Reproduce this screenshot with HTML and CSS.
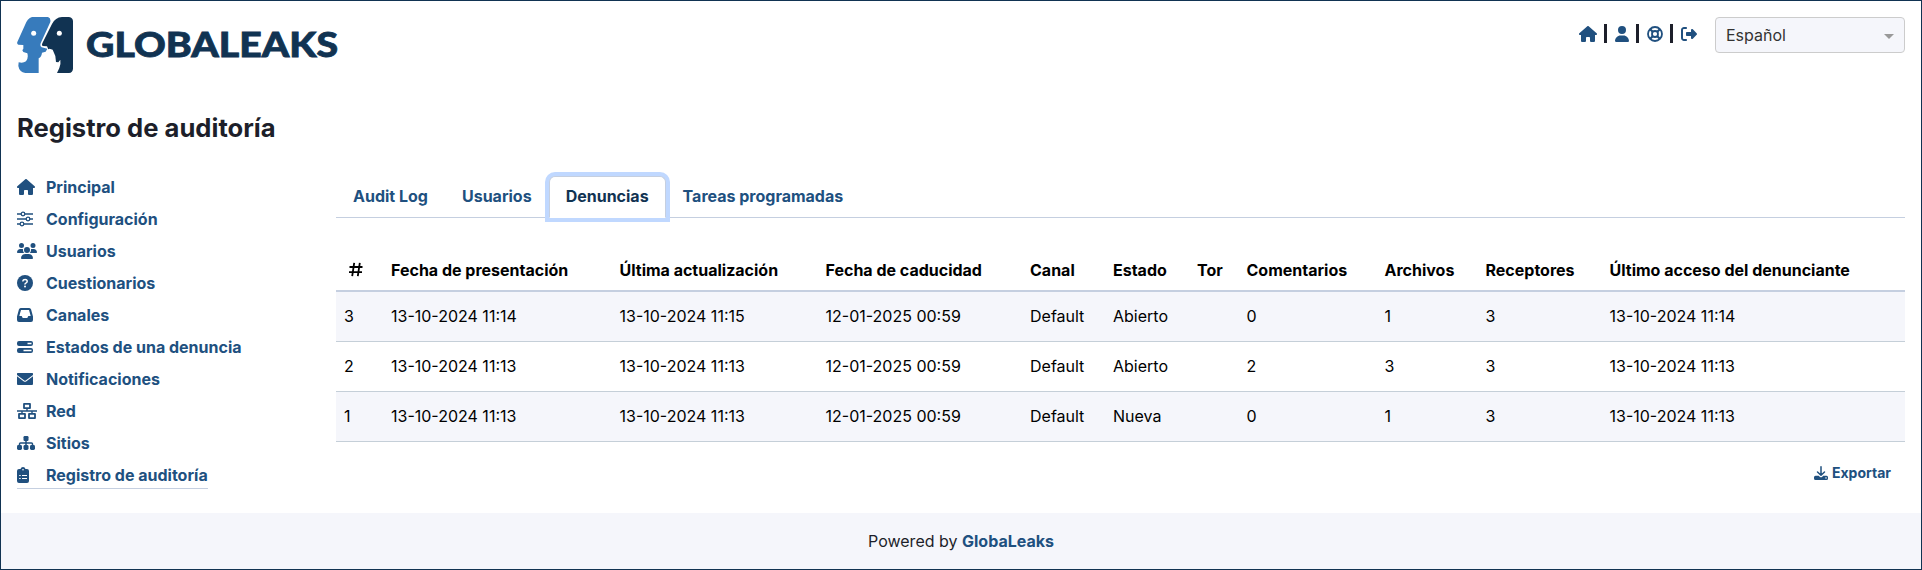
FILE: index.html
```html
<!DOCTYPE html>
<html lang="es">
<head>
<meta charset="utf-8">
<title>GlobaLeaks</title>
<link rel="stylesheet" href="styles.css">
</head>
<body>
<svg class="defs" width="0" height="0">
  <symbol id="home" viewBox="0 0 576 512"><path d="M575.8 255.5c0 18-15 32.1-32 32.1h-32l.7 160.2c0 2.7-.2 5.4-.5 8.1V472c0 22.1-17.9 40-40 40H392c-22.1 0-40-17.9-40-40V384c0-17.7-14.3-32-32-32H256c-17.7 0-32 14.3-32 32v88c0 22.1-17.9 40-40 40H104c-22.1 0-40-17.9-40-40V287.6H32c-18 0-32-14-32-32.1c0-9 3-17 10-24L266.4 8c7-7 15-8 22-8s15 2 21 7L564.8 231.5c8 7 12 15 11 24z"/></symbol>
</svg>
<div class="page">
  <header class="header">
    <div class="brand">
      <svg class="mark" viewBox="51 51 168 168">
        <path fill="#377bbc" d="M96 51H144Q153 53 151 66L122 130Q119 139 125 142L142 146L137 155L126 158Q125 170 116 175V219H76Q58 216 55 198L56 187Q69 191 78 184Q86 174 82 160L70 156L67 151L70 146V135L55 134Q50 131 52 126L74 77Q82 55 96 51Z"/>
        <path fill="#113352" d="M186 51H207Q219 53 219 64V206Q218 218 207 219H171L178 204Q183 191 181 179L175 187L168 186L166 168L158 149L149 146L145 148L141 139L128 138Q124 136 127 130L156 72Q166 52 186 51Z"/>
        <circle cx="101" cy="100" r="7.5" fill="#fff"/><circle cx="178" cy="100" r="7.5" fill="#fff"/>
      </svg>
      <svg class="wordmark" viewBox="0 0 256 40"><text x="0" y="33" textLength="252" lengthAdjust="spacingAndGlyphs">GLOBALEAKS</text></svg>
    </div>
    <div class="tools">
      <svg class="icon" width="18" height="16"><use href="#home"/></svg><i class="bar"></i>
      <svg class="icon" width="14" height="16" viewBox="0 0 448 512"><path d="M224 256A128 128 0 1 0 224 0a128 128 0 1 0 0 256zm-45.7 48C79.8 304 0 383.8 0 482.3C0 498.7 13.3 512 29.7 512H418.3c16.4 0 29.7-13.3 29.7-29.7C448 383.8 368.2 304 269.7 304H178.3z"/></svg><i class="bar"></i>
      <svg class="icon line" width="16" height="16" viewBox="0 0 16 16"><circle cx="8" cy="8" r="7" stroke-width="1.8"/><circle cx="8" cy="8" r="3" stroke-width="1.8"/><path stroke-width="2.2" d="M3.2 3.2l2.5 2.5M12.8 3.2l-2.5 2.5M3.2 12.8l2.5-2.5M12.8 12.8l-2.5-2.5"/></svg><i class="bar"></i>
      <svg class="icon" width="16" height="16" viewBox="0 0 512 512"><path d="M377.9 105.9L500.7 228.7c7.2 7.2 11.3 17.1 11.3 27.3s-4.1 20.1-11.3 27.3L377.9 406.1c-6.4 6.4-15 9.9-24 9.9c-18.7 0-33.9-15.2-33.9-33.9l0-62.1-128 0c-17.7 0-32-14.3-32-32l0-64c0-17.7 14.3-32 32-32l128 0 0-62.1c0-18.7 15.2-33.9 33.9-33.9c9 0 17.6 3.6 24 9.9zM160 96L96 96c-17.7 0-32 14.3-32 32l0 256c0 17.7 14.3 32 32 32l64 0c17.7 0 32 14.3 32 32s-14.3 32-32 32l-64 0c-53 0-96-43-96-96L0 128C0 75 43 32 96 32l64 0c17.7 0 32 14.3 32 32s-14.3 32-32 32z"/></svg>
      <div class="select"><span>Español</span><i class="caret"></i></div>
    </div>
  </header>
  <h1 class="title">Registro de auditoría</h1>
  <div class="main">
    <nav class="side">
      <a class="item"><span class="ico"><svg class="icon" width="18" height="16"><use href="#home"/></svg></span>Principal</a>
      <a class="item"><span class="ico"><svg class="icon line" width="16" height="16" viewBox="0 0 16 16"><path stroke-width="1.5" d="M0 3h4M8 3h8M0 8h9M13 8h3M0 13h3M7 13h9"/><g stroke-width="1.3"><circle cx="6" cy="3" r="1.8"/><circle cx="11" cy="8" r="1.8"/><circle cx="5" cy="13" r="1.8"/></g></svg></span>Configuración</a>
      <a class="item"><span class="ico"><svg class="icon" width="20" height="16" viewBox="0 0 640 512"><path d="M144 0a80 80 0 1 1 0 160A80 80 0 1 1 144 0zM512 0a80 80 0 1 1 0 160A80 80 0 1 1 512 0zM0 298.7C0 239.8 47.8 192 106.7 192h42.7c15.900 0 31 3.500 44.600 9.700c-1.300 7.200-1.900 14.700-1.900 22.300c0 38.200 16.800 72.500 43.300 96H21.300C9.600 320 0 310.400 0 298.700zM405.300 320h-.7c26.600-23.500 43.300-57.800 43.300-96c0-7.600-.7-15-1.900-22.300c13.600-6.300 28.700-9.700 44.600-9.700h42.700C592.200 192 640 239.800 640 298.700c0 11.800-9.600 21.300-21.300 21.300H405.300zM224 224a96 96 0 1 1 192 0 96 96 0 1 1-192 0zM128 485.300C128 411.700 187.700 352 261.300 352H378.700C452.300 352 512 411.700 512 485.300c0 14.700-11.900 26.700-26.700 26.700H154.700c-14.700 0-26.700-11.900-26.700-26.700z"/></svg></span>Usuarios</a>
      <a class="item"><span class="ico"><svg class="icon" width="16" height="16" viewBox="0 0 16 16"><circle cx="8" cy="8" r="8"/><path fill="none" stroke="#fff" stroke-width="1.5" stroke-linecap="round" d="M5.900 5.900C6 4.800 6.700 4.600 8.100 4.600C10.700 4.600 10.800 7 9.200 7.800Q8 8.400 8 9.100"/><circle cx="8" cy="11.500" r="1" fill="#fff"/></svg></span>Cuestionarios</a>
      <a class="item"><span class="ico"><svg class="icon" width="16" height="16" viewBox="0 0 16 16"><path fill-rule="evenodd" d="M3.800 1H12.200Q13.700 1 14.100 2.500L16 9.500V13Q16 15 14 15H2Q0 15 0 13V9.500L1.900 2.500Q2.300 1 3.800 1ZM4 3L2.300 9H4.700L5.700 11H10.300L11.300 9H13.700L12 3Z"/></svg></span>Canales</a>
      <a class="item"><span class="ico"><svg class="icon" width="16" height="16" viewBox="0 0 16 16"><path fill-rule="evenodd" d="M2 2H14Q16 2 16 4V5Q16 7 14 7H2Q0 7 0 5V4Q0 2 2 2ZM10.500 3.700V5.200H14.500V3.700ZM2 9H14Q16 9 16 11V12Q16 14 14 14H2Q0 14 0 12V11Q0 9 2 9ZM6.500 10.800V12.200H14.500V10.800Z"/></svg></span>Estados de una denuncia</a>
      <a class="item"><span class="ico"><svg class="icon" width="16" height="16" viewBox="0 0 16 16"><path d="M.5 2H15.500L16 2.500V4L8.700 9.600Q8 10.100 7.300 9.600L0 4V2.500ZM0 5.200L6.900 10.500Q8 11.200 9.100 10.500L16 5.200V13.300L15.300 14H.7L0 13.300Z"/></svg></span>Notificaciones</a>
      <a class="item"><span class="ico"><svg class="icon line" width="20" height="16" viewBox="0 0 20 16"><path stroke-width="1.400" d="M0 8H20M10 5V8M5 8V11M15 8V11"/><path stroke-width="1.800" stroke-linejoin="round" d="M7 .9H13V5.100H7ZM2 10.900H8V15.100H2ZM12 10.900H18V15.100H12Z"/></svg></span>Red</a>
      <a class="item"><span class="ico"><svg class="icon" width="18" height="16" viewBox="0 0 18 16"><rect x="6.500" y="1" width="5" height="5" rx="1.200"/><rect y="10" width="5" height="5" rx="1.400"/><rect x="6.500" y="10" width="5" height="5" rx="1.400"/><rect x="13" y="10" width="5" height="5" rx="1.400"/><path fill="none" stroke="#20507f" stroke-width="1.500" d="M9 5V11M2.500 11V9Q2.500 8 3.500 8H14.500Q15.500 8 15.500 9V11"/></svg></span>Sitios</a>
      <a class="item active"><span class="ico"><svg class="icon" width="12" height="16" viewBox="0 0 12 16"><path d="M2 2H3.500Q4 0 6 0T8.500 2H10Q12 2 12 4V14Q12 16 10 16H2Q0 16 0 14V4Q0 2 2 2Z"/><circle cx="6" cy="2.800" r=".8" fill="#fff"/><path stroke="#fff" stroke-width="1" d="M2.200 8.500H3.700M5 8.500H10M2.200 11.500H3.700M5 11.500H10"/></svg></span>Registro de auditoría</a>
    </nav>
    <section class="content">
      <div class="tabs"><a class="tab">Audit Log</a><a class="tab">Usuarios</a><a class="tab on">Denuncias</a><a class="tab">Tareas programadas</a></div>
      <table class="table">
        <colgroup><col class="c1"><col class="c2"><col class="c3"><col class="c4"><col class="c5"><col class="c6"><col class="c7"><col class="c8"><col class="c9"><col class="c10"><col></colgroup>
        <thead><tr><th class="num"><svg width="14" height="15" viewBox="0 0 14 15"><path d="M.5 5H13.500M0 10.200H13M5.200 .8L3.200 14.200M10.800 .8L8.800 14.200" stroke="#000" stroke-width="1.800" fill="none"/></svg></th><th>Fecha de presentación</th><th>Última actualización</th><th>Fecha de caducidad</th><th>Canal</th><th>Estado</th><th>Tor</th><th>Comentarios</th><th>Archivos</th><th>Receptores</th><th>Último acceso del denunciante</th></tr></thead>
        <tbody>
          <tr><td>3</td><td>13-10-2024 11:14</td><td>13-10-2024 11:15</td><td>12-01-2025 00:59</td><td>Default</td><td>Abierto</td><td></td><td>0</td><td>1</td><td>3</td><td>13-10-2024 11:14</td></tr>
          <tr><td>2</td><td>13-10-2024 11:13</td><td>13-10-2024 11:13</td><td>12-01-2025 00:59</td><td>Default</td><td>Abierto</td><td></td><td>2</td><td>3</td><td>3</td><td>13-10-2024 11:13</td></tr>
          <tr><td>1</td><td>13-10-2024 11:13</td><td>13-10-2024 11:13</td><td>12-01-2025 00:59</td><td>Default</td><td>Nueva</td><td></td><td>0</td><td>1</td><td>3</td><td>13-10-2024 11:13</td></tr>
        </tbody>
      </table>
      <div class="export"><svg class="icon" width="14" height="14" viewBox="0 0 14 14"><path fill="none" stroke="#20507f" stroke-width="1.500" stroke-linecap="round" stroke-linejoin="round" d="M7 .8V9M3.500 6L7 9.300L10.500 6"/><path fill-rule="evenodd" d="M1.500 9.800H4.700L6 11Q7 11.700 8 11L9.300 9.800H12.500Q14 9.800 14 11.300V12.500Q14 14 12.500 14H1.500Q0 14 0 12.500V11.300Q0 9.800 1.500 9.800ZM12 11.300a.7.7 0 1 0 .01 0Z"/></svg>Exportar</div>
    </section>
  </div>
  <footer class="footer">Powered by&nbsp;<b>GlobaLeaks</b></footer>
</div>
</body>
</html>
```
FILE: styles.css
```css
* { box-sizing: border-box; }
body { margin: 0; font: 16px/24px Inter, sans-serif; color: #1d1f2a; background: #fff; }
.defs { position: absolute; }
.page { height: 570px; border: 1px solid #113352; display: flex; flex-direction: column; }
.header { display: flex; justify-content: space-between; padding: 16px 16px 0; height: 109px; }
.brand { display: flex; gap: 13px; }
.mark { width: 56px; height: 56px; }
.wordmark { width: 256px; height: 40px; margin-top: 7px; }
.wordmark text { font: 900 34.5px Lato, sans-serif; fill: #113352; stroke: #113352; stroke-width: .8px; }
.icon { fill: #20507f; display: block; flex: none; }
.line { fill: none; stroke: #20507f; }
.tools { display: flex; align-items: flex-start; }
.tools > .icon { margin-top: 9px; }
.bar { width: 3px; height: 19px; margin: 7px 8px 0 7px; background: #1d1f2a; }
.select { width: 190px; height: 36px; margin-left: 18px; padding: 0 10px; border: 1px solid #ccc; border-radius: 4px; background: #f5f6fb; color: #333; display: flex; align-items: center; justify-content: space-between; }
.caret { border: 5px solid transparent; border-top-color: #999; border-bottom: 0; margin-top: 3px; }
.title { margin: 0 16px; font-size: 25.6px; line-height: 36px; font-weight: 700; }
.main { display: flex; padding: 26px 16px 0; }
.side { width: 319px; display: flex; flex-direction: column; align-items: flex-start; gap: 4px; padding-top: 1px; }
.item { display: flex; align-items: center; height: 28px; color: #20507f; font-weight: 700; border-bottom: 1px solid transparent; }
.ico { width: 29px; }
.active { border-color: #c5cfe0; }
.content { flex: 1; }
.tabs { display: flex; height: 46px; padding-top: 4px; border-bottom: 1px solid #c5cfe0; }
.tab { height: 42px; padding: 7px 16px 8px; border: 1px solid transparent; color: #20507f; font-weight: 700; }
.on { background: #fff; border-color: #c5cfe0 #c5cfe0 #fff; border-radius: 6px 6px 0 0; color: #113352; box-shadow: 0 0 0 4px #c0d8ff; }
.table { width: 100%; margin-top: 31px; border-collapse: collapse; table-layout: fixed; color: #000; }
th, td { text-align: left; padding: 8px; white-space: nowrap; }
th { height: 42px; font-weight: 700; border-bottom: 2px solid #c5cfe0; }
td { height: 50px; border-bottom: 1px solid #c5cfd8; }
tbody tr:nth-child(odd) { background: #f5f6fb; }
.num { padding-left: 13px; }
.num svg { display: block; }
.c1 { width: 47px; } .c2 { width: 228.5px; } .c3 { width: 206px; } .c4 { width: 204.500px; } .c5 { width: 83px; } .c6 { width: 84px; } .c7 { width: 49.500px; } .c8 { width: 138px; } .c9 { width: 101px; } .c10 { width: 124px; }
.export { display: flex; justify-content: flex-end; align-items: center; gap: 4px; margin: 19px 14px 0 0; font-size: 14px; font-weight: 700; color: #20507f; }
.footer { margin-top: auto; height: 56px; padding-bottom: 1px; display: flex; justify-content: center; align-items: center; background: #f5f6fb; }
.footer b { color: #20507f; font-weight: 700; }
```
